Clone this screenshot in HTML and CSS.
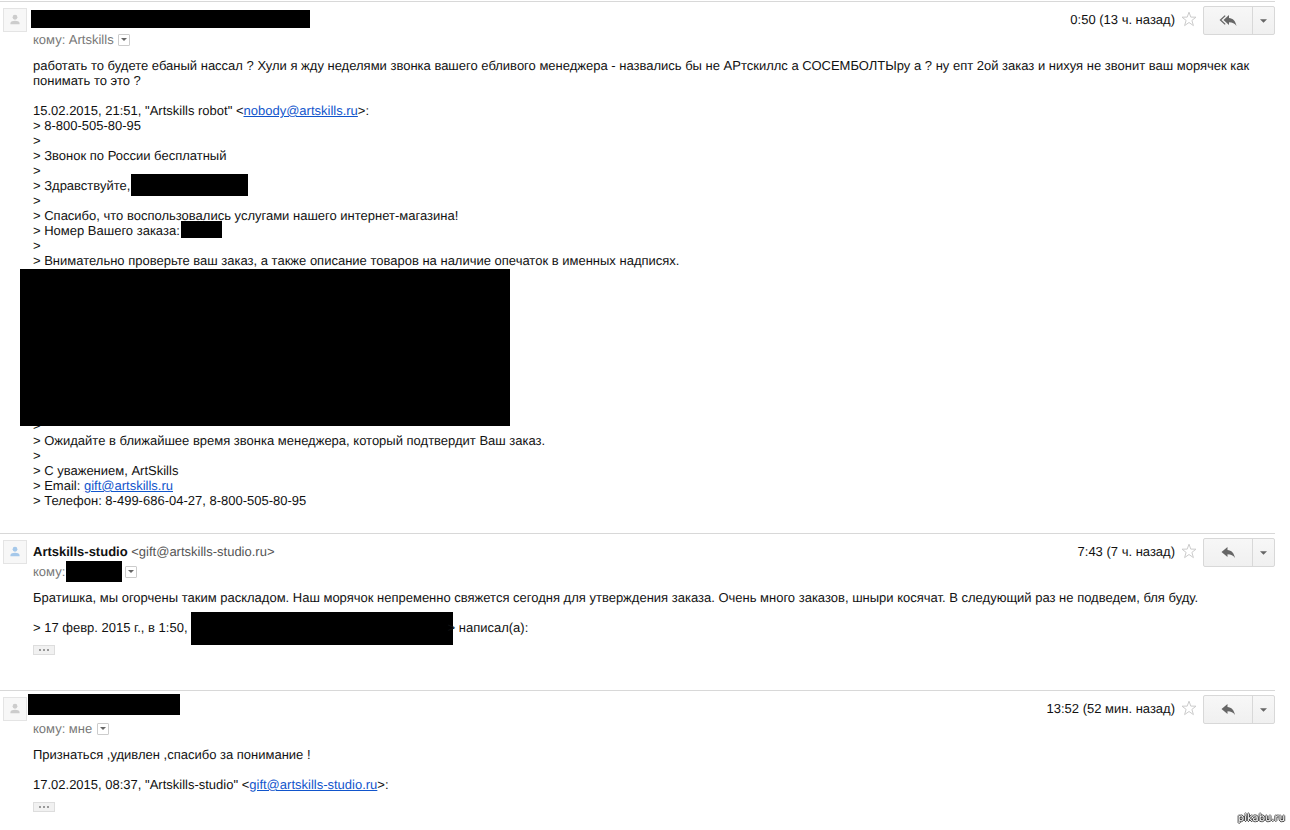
FILE: index.html
```html
<!DOCTYPE html>
<html lang="ru">
<head>
<meta charset="utf-8">
<title>Переписка</title>
<link rel="stylesheet" href="styles.css">
</head>
<body>
<svg class="defs" aria-hidden="true">
  <symbol id="person" viewBox="0 0 24 24"><circle cx="12" cy="9" r="2.6"/><path d="M7 16.500v-1.200c0-1.800 2.800-2.600 5-2.600s5 .8 5 2.600v1.200z"/></symbol>
  <symbol id="star" viewBox="0 0 16 16"><path d="M8 1.200 9.800 6.100 15 6.200 10.900 9.400 12.400 14.600 8 11.500 3.600 14.600 5.100 9.400 1 6.200 6.200 6.100z"/></symbol>
  <symbol id="reply" viewBox="0 0 18 14"><path d="M2.500 6 8.500 1v3c4 .2 6.500 3 7.500 8-1.700-2.500-4-3.700-7.500-3.700v2.700z"/></symbol>
  <symbol id="reply-all" viewBox="0 0 18 14"><path d="M4.500 6 10 1v3c4 .2 6.500 3 7.500 8-1.700-2.500-4-3.700-7.500-3.700v2.700z"/><path d="M6.200 1.600 1.500 6 6.200 10.400" fill="none" stroke="currentColor" stroke-width="1.300"/></symbol>
  <symbol id="caret" viewBox="0 0 8 4"><path d="M0 0h8L4 4z"/></symbol>
</svg>
<main class="thread">
  <article class="message">
    <header class="head">
      <svg class="avatar"><use href="#person"/></svg>
      <div class="who">
        <div class="sender"><span class="bar bar-sender-a"></span></div>
        <div class="to">кому: Artskills <button class="details" aria-label="Показать детали"><svg><use href="#caret"/></svg></button></div>
      </div>
      <time class="time">0:50 (13 ч. назад)</time>
      <button class="star" aria-label="Пометить"><svg><use href="#star"/></svg></button>
      <div class="actions">
        <button class="reply" aria-label="Ответить всем"><svg><use href="#reply-all"/></svg></button>
        <button class="more" aria-label="Ещё"><svg><use href="#caret"/></svg></button>
      </div>
    </header>
    <div class="body">
      <p>работать то будете ебаный нассал ? Хули я жду неделями звонка вашего ебливого менеджера - назвались бы не АРтскиллс а СОСЕМБОЛТЫру а ? ну епт 2ой заказ и нихуя не звонит ваш морячек как понимать то это ?</p>
      <div class="quote">
        <div>15.02.2015, 21:51, "Artskills robot" &lt;<a href="mailto:nobody@artskills.ru">nobody@artskills.ru</a>&gt;:</div>
        <div>&gt; 8-800-505-80-95</div>
        <div>&gt;</div>
        <div>&gt; Звонок по России бесплатный</div>
        <div>&gt;</div>
        <div>&gt; Здравствуйте,<span class="bar bar-name"></span></div>
        <div>&gt;</div>
        <div>&gt; Спасибо, что воспользовались услугами нашего интернет-магазина!</div>
        <div>&gt; Номер Вашего заказа:<span class="bar bar-order"></span></div>
        <div>&gt;</div>
        <div>&gt; Внимательно проверьте ваш заказ, а также описание товаров на наличие опечаток в именных надписях.</div>
        <div class="hidden-lines">
          <div>&gt;</div>
          <div class="bar bar-items"></div>
        </div>
        <div>&gt; Ожидайте в ближайшее время звонка менеджера, который подтвердит Ваш заказ.</div>
        <div>&gt;</div>
        <div>&gt; С уважением, ArtSkills</div>
        <div>&gt; Email: <a href="mailto:gift@artskills.ru">gift@artskills.ru</a></div>
        <div>&gt; Телефон: 8-499-686-04-27, 8-800-505-80-95</div>
      </div>
    </div>
  </article>

  <article class="message">
    <header class="head">
      <svg class="avatar avatar-blue"><use href="#person"/></svg>
      <div class="who">
        <div class="sender"><b>Artskills-studio</b> <span class="address">&lt;gift@artskills-studio.ru&gt;</span></div>
        <div class="to">кому:<span class="bar bar-to"></span><button class="details" aria-label="Показать детали"><svg><use href="#caret"/></svg></button></div>
      </div>
      <time class="time">7:43 (7 ч. назад)</time>
      <button class="star" aria-label="Пометить"><svg><use href="#star"/></svg></button>
      <div class="actions">
        <button class="reply" aria-label="Ответить"><svg><use href="#reply"/></svg></button>
        <button class="more" aria-label="Ещё"><svg><use href="#caret"/></svg></button>
      </div>
    </header>
    <div class="body">
      <p>Братишка, мы огорчены таким раскладом. Наш морячок непременно свяжется сегодня для утверждения заказа. Очень много заказов, шныри косячат. В следующий раз не подведем, бля буду.</p>
      <div class="quote">&gt; 17 февр. 2015 г., в 1:50,<span class="bar bar-author"></span>&gt; написал(а):</div>
      <button class="trimmed" aria-label="Показать скрытый текст"><i></i><i></i><i></i></button>
    </div>
  </article>

  <article class="message">
    <header class="head">
      <svg class="avatar"><use href="#person"/></svg>
      <div class="who">
        <div class="sender"><span class="bar bar-sender-b"></span></div>
        <div class="to">кому: мне <button class="details" aria-label="Показать детали"><svg><use href="#caret"/></svg></button></div>
      </div>
      <time class="time">13:52 (52 мин. назад)</time>
      <button class="star" aria-label="Пометить"><svg><use href="#star"/></svg></button>
      <div class="actions">
        <button class="reply" aria-label="Ответить"><svg><use href="#reply"/></svg></button>
        <button class="more" aria-label="Ещё"><svg><use href="#caret"/></svg></button>
      </div>
    </header>
    <div class="body">
      <p>Признаться ,удивлен ,спасибо за понимание !</p>
      <div class="quote">17.02.2015, 08:37, "Artskills-studio" &lt;<a href="mailto:gift@artskills-studio.ru">gift@artskills-studio.ru</a>&gt;:</div>
      <button class="trimmed" aria-label="Показать скрытый текст"><i></i><i></i><i></i></button>
    </div>
  </article>
</main>
<div class="watermark">pikabu.ru</div>
</body>
</html>
```
FILE: styles.css
```css
* { box-sizing: border-box; }

body {
  margin: 0;
  background: #fff;
  color: #111;
  font: 13px/15px "Liberation Sans", Arial, sans-serif;
  text-rendering: geometricPrecision;
}

button {
  margin: 0;
  padding: 0;
  border: 0;
  background: none;
  color: inherit;
  font: inherit;
}

svg { display: block; fill: currentColor; }
p { margin: 0 0 15px; }
a { color: #15c; }

.defs { display: none; }

.thread { padding: 1px 15px 0 0; }

.message {
  border-top: 1px solid #d8d8d8;
  padding-bottom: 25px;
}
.message:nth-child(2) { padding-bottom: 35px; }
.message:last-child { padding-bottom: 10px; }

.head {
  display: flex;
  align-items: flex-start;
  height: 56px;
  padding: 4px 0 0 3px;
}

.avatar {
  flex: none;
  width: 24px;
  height: 24px;
  margin: 2px 6px 0 0;
  border: 1px solid #e4e4e4;
  background: #f7f7f7;
  color: #ccc;
}
.avatar-blue { color: #a5c8ea; }

.who { flex: 1; min-width: 0; }

.sender {
  height: 18px;
  margin-top: 4px;
  line-height: 20px;
}
.address { color: #555; }

.to {
  display: flex;
  align-items: center;
  height: 18px;
  margin-top: 2px;
  color: #777;
  white-space: pre;
}

.details {
  display: grid;
  place-items: center;
  width: 12px;
  height: 12px;
  margin: 1px 0 0 1px;
  border: 1px solid #ccc;
  border-radius: 1px;
  color: #666;
}
.details svg { width: 6px; height: 3px; }

.time { margin-top: 4px; line-height: 20px; }

.star {
  width: 16px;
  height: 16px;
  margin: 5px 6px 0;
  color: #ccc;
}
.star svg {
  width: 16px;
  height: 16px;
  fill: none;
  stroke: currentColor;
}

.actions {
  display: flex;
  width: 72px;
  height: 29px;
  border: 1px solid #d8d8d8;
  border-radius: 2px;
  background: linear-gradient(#f7f7f7, #f0f0f0);
  color: #666;
}
.reply, .more { display: grid; place-items: center; }
.reply { flex: 1; }
.reply svg { width: 18px; height: 14px; }
.more { width: 22px; border-left: 1px solid #d8d8d8; }
.more svg { width: 7px; height: 4px; }

.body { padding-left: 33px; }

.bar {
  display: inline-block;
  background: #000;
  vertical-align: top;
}
.bar-sender-a { width: 279px; height: 18px; margin-left: -2px; }
.bar-sender-b { width: 152px; height: 21px; margin: -5px 0 0 -5px; }
.bar-to { width: 56px; height: 21px; margin: 1px 2px 0 1px; }
.bar-name { width: 117px; height: 22px; margin: -4px 0 -3px 1px; }
.bar-order { width: 41px; height: 17px; margin: -2px 0 0 1px; }
.bar-author { width: 262px; height: 33px; margin: -8px -5px -10px 3px; }

.hidden-lines {
  position: relative;
  display: flex;
  flex-direction: column;
  justify-content: flex-end;
  height: 165px;
}
.bar-items {
  position: absolute;
  top: 1px;
  left: -13px;
  width: 490px;
  height: 157px;
}

.trimmed {
  display: flex;
  align-items: center;
  justify-content: center;
  gap: 2px;
  width: 22px;
  height: 10px;
  margin-top: 10px;
  border: 1px solid #ddd;
  background: #f1f1f1;
}
.trimmed i { width: 2px; height: 2px; background: #999; }

.watermark {
  position: fixed;
  right: 5px;
  bottom: 4px;
  color: #fff;
  font: 10px/14px "DejaVu Sans", sans-serif;
  text-shadow: 1px 0 #333, -1px 0 #333, 0 1px #333, 0 -1px #333;
}
```
